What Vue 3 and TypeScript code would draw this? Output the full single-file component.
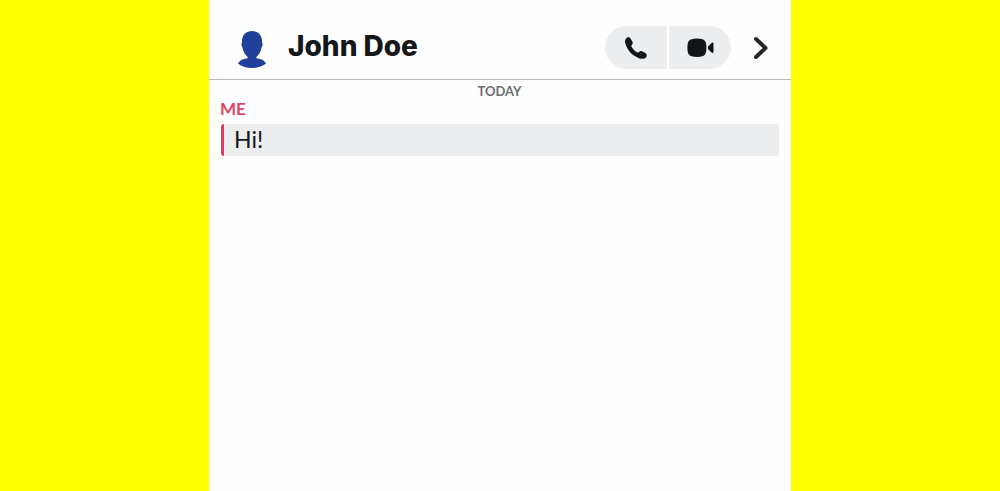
<script setup lang="ts">
interface Message {
  id: number
  sender: string
  text: string
}

const contact = 'John Doe'
const messages: Message[] = [{ id: 1, sender: 'Me', text: 'Hi!' }]
</script>

<template>
  <div class="page">
    <main class="chat">
      <header class="bar">
        <svg class="avatar" viewBox="0 0 30 38" aria-hidden="true">
          <path d="M15 0C20.500 0 25 3.500 25 10C25 10.500 25 11 25 11.500C26 12 25.500 15.500 24.500 16.500C23.800 21 21.500 24 19.500 26C19 27 19.500 27.300 20.500 27.600C24 28 27.500 29.500 29 32.500C25.500 35.500 20 37 15 37C10 37 4.500 35.500 1 32.500C2.500 29.500 6 28 9.500 27.600C10.500 27.300 11 27 10.500 26C8.500 24 6.200 21 5.500 16.500C4.500 15.500 4 12 5 11.500C5 11 5 10.500 5 10C5 3.500 9.500 0 15 0Z" />
        </svg>
        <h1 class="name">{{ contact }}</h1>
        <div class="calls">
          <button class="call" type="button" aria-label="Voice call">
            <svg class="phone" viewBox="0 0 22 22" aria-hidden="true">
              <path d="M1.500 0.900C3 -0.100 4.800 0.200 5.600 1.700L7.300 4.600C8.100 6 7.800 7.200 6.700 8.200C6.200 8.800 6.200 9.200 6.700 10C8 12.200 9.700 13.900 12 15.200C12.800 15.700 13.300 15.700 13.900 15.100C15 14 16.100 13.700 17.500 14.400L20.300 15.900C21.900 16.700 22.200 18.800 21.100 20.200C19.800 21.800 17.400 22.300 14.600 21.400C7.800 19.200 2.700 14 0.500 7.100C-0.300 4.500 0 2.200 1.500 0.900Z" />
            </svg>
          </button>
          <button class="call" type="button" aria-label="Video call">
            <svg class="video" viewBox="0 0 27 20" aria-hidden="true">
              <path d="M10 0.500C14.500 0.500 17 1.200 18.300 3.500C19.800 6.500 19.800 13 18.300 16C17 18.300 14.500 19 10 19C5.500 19 3 18.300 1.500 16C0 13 0 6.500 1.500 3.500C3 1.200 5.500 0.500 10 0.500Z" />
              <path d="M21.500 8L24.800 4.800C25.800 4.100 26.500 4.400 26.500 5.500V14C26.500 15.100 25.800 15.400 24.800 14.700L21.500 11.500C20.700 10.600 20.700 8.900 21.500 8Z" />
            </svg>
          </button>
        </div>
        <button class="next" type="button" aria-label="Open details">
          <svg class="chevron" viewBox="0 0 16 24" aria-hidden="true">
            <path d="M3 3L12.500 12L3 21" />
          </svg>
        </button>
      </header>

      <section class="thread">
        <p class="day">TODAY</p>
        <article v-for="message in messages" :key="message.id">
          <h2 class="sender">{{ message.sender }}</h2>
          <p class="text">{{ message.text }}</p>
        </article>
      </section>
    </main>
  </div>
</template>

<style>
body {
  margin: 0;
  background: #ffff00;
}
</style>

<style scoped>
.page {
  display: flex;
  justify-content: center;
  min-height: 100vh;
  background: #ffff00;
  font-family: Lato, "Liberation Sans", sans-serif;
}

.chat {
  width: 58.2%;
  background: #fefefe;
}

.bar {
  display: flex;
  align-items: center;
  padding: 26px 22px 10px 28px;
  border-bottom: 1px solid #b9b9bb;
}

.avatar {
  width: 30px;
  height: 38px;
  margin-top: 5px;
  fill: #20409a;
}

.name {
  flex: 1;
  margin: 0 0 0 21px;
  padding-bottom: 3px;
  color: #151719;
  font-family: Inter, "Liberation Sans", sans-serif;
  font-size: 28px;
  font-weight: 800;
  line-height: 40px;
}

.calls {
  display: flex;
  gap: 2px;
  border-radius: 22px;
  overflow: hidden;
}

.call {
  display: flex;
  align-items: center;
  justify-content: center;
  width: 62px;
  height: 43px;
  padding: 0;
  border: 0;
  background: #ebedef;
  fill: #121416;
}

.phone {
  width: 22px;
  height: 22px;
}

.video {
  width: 27px;
  height: 20px;
}

.next {
  display: flex;
  margin-left: 22px;
  padding: 0;
  border: 0;
  background: none;
}

.chevron {
  width: 16px;
  height: 24px;
  fill: none;
  stroke: #242628;
  stroke-width: 4;
  stroke-linecap: round;
  stroke-linejoin: round;
}

.thread {
  padding: 3px 12px 12px 11px;
}

.day {
  margin: 0;
  color: #6b6e72;
  font-size: 13px;
  font-weight: 700;
  line-height: 16px;
  text-align: center;
}

.sender {
  margin: 0;
  color: #dc4768;
  font-size: 17px;
  font-weight: 700;
  line-height: 20px;
  text-transform: uppercase;
}

.text {
  margin: 5px 0 0 1px;
  padding: 0 10px 2px;
  border-left: 3px solid #d83e60;
  border-radius: 3px;
  background: #ebedef;
  color: #151719;
  font-size: 23px;
  line-height: 30px;
}
</style>
